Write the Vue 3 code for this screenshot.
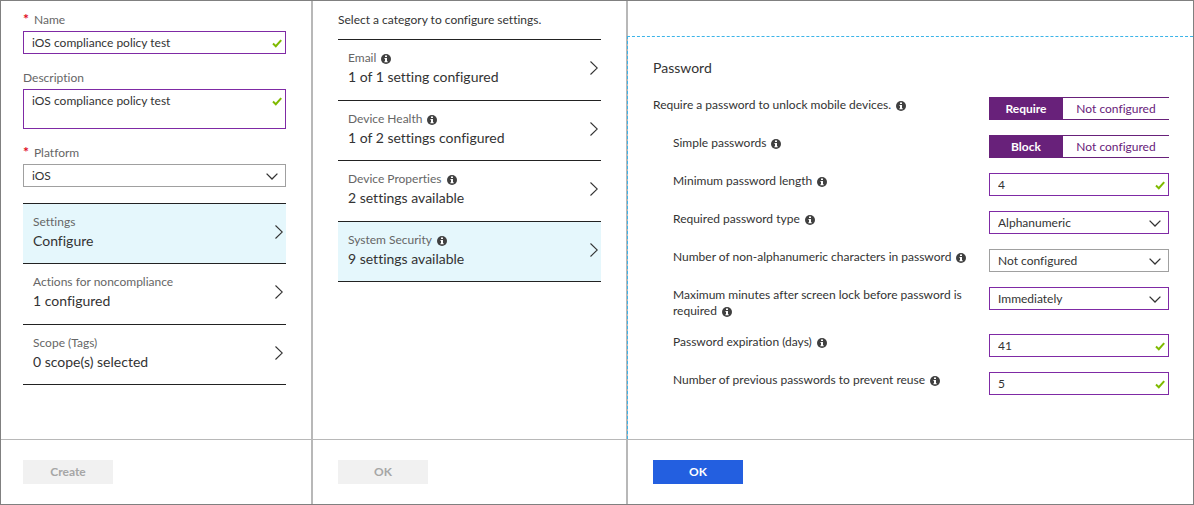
<script setup>
import { ref } from 'vue'

const name = ref('iOS compliance policy test')
const description = ref('iOS compliance policy test')
const platform = ref('iOS')

const steps = [
  { label: 'Settings', value: 'Configure', active: true },
  { label: 'Actions for noncompliance', value: '1 configured' },
  { label: 'Scope (Tags)', value: '0 scope(s) selected' },
]

const categories = [
  { label: 'Email', value: '1 of 1 setting configured' },
  { label: 'Device Health', value: '1 of 2 settings configured' },
  { label: 'Device Properties', value: '2 settings available' },
  { label: 'System Security', value: '9 settings available', active: true },
]

const settings = ref([
  { id: 'require', lead: 'Require a password to unlock mobile', last: 'devices.', type: 'toggle', on: 'Require', root: true },
  { id: 'simple', lead: 'Simple', last: 'passwords', type: 'toggle', on: 'Block' },
  { id: 'length', lead: 'Minimum password', last: 'length', type: 'text', value: '4' },
  { id: 'kind', lead: 'Required password', last: 'type', type: 'select', value: 'Alphanumeric', changed: true },
  { id: 'symbols', lead: 'Number of non-alphanumeric characters in', last: 'password', type: 'select', value: 'Not configured' },
  { id: 'lock', lead: 'Maximum minutes after screen lock before password is', last: 'required', type: 'select', value: 'Immediately', changed: true },
  { id: 'expiry', lead: 'Password expiration', last: '(days)', type: 'text', value: '41' },
  { id: 'reuse', lead: 'Number of previous passwords to prevent', last: 'reuse', type: 'text', value: '5' },
])
</script>

<template>
  <main class="blades">
    <section class="blade">
      <form class="body policy" @submit.prevent>
        <div class="group">
          <label for="name"><span class="star">*</span>Name</label>
          <div class="field">
            <input id="name" v-model="name" type="text" class="control changed" />
            <svg class="mark" viewBox="0 0 10 9"><path d="M1 4.5 3.8 7.2 9.2 1.2" /></svg>
          </div>
        </div>
        <div class="group">
          <label for="description">Description</label>
          <div class="field">
            <textarea id="description" v-model="description" class="control changed"></textarea>
            <svg class="mark" viewBox="0 0 10 9"><path d="M1 4.5 3.8 7.2 9.2 1.2" /></svg>
          </div>
        </div>
        <div class="group">
          <label for="platform"><span class="star">*</span>Platform</label>
          <div class="field">
            <select id="platform" v-model="platform" class="control">
              <option>iOS</option>
            </select>
            <svg class="arrow" viewBox="0 0 12 7"><path d="M.6.6 6 6 11.4.6" /></svg>
          </div>
        </div>
        <div class="list">
          <button v-for="s in steps" :key="s.label" type="button" class="item" :class="{ active: s.active }">
            <span class="caption">{{ s.label }}</span>
            <span class="value">{{ s.value }}</span>
            <svg class="chevron" viewBox="0 0 8 14"><path d="M.5.5 7.3 7 .5 13.5" /></svg>
          </button>
        </div>
      </form>
      <footer><button type="button" disabled class="action">Create</button></footer>
    </section>

    <section class="blade">
      <div class="body categories">
        <p class="hint">Select a category to configure settings.</p>
        <div class="list">
          <button v-for="c in categories" :key="c.label" type="button" class="item" :class="{ active: c.active }">
            <span class="caption">{{ c.label }}<svg class="info" viewBox="0 0 10 10"><circle cx="5" cy="5" r="5" /><path d="M4 1.5h2v1.5H4zM3.5 4H6v3.3h.7v1H3.4v-1H4V5h-.5z" /></svg></span>
            <span class="value">{{ c.value }}</span>
            <svg class="chevron" viewBox="0 0 8 14"><path d="M.5.5 7.3 7 .5 13.5" /></svg>
          </button>
        </div>
      </div>
      <footer><button type="button" disabled class="action">OK</button></footer>
    </section>

    <section class="blade">
      <form class="body security" @submit.prevent>
        <h2>Password</h2>
        <div class="settings">
          <div v-for="s in settings" :key="s.id" class="setting" :class="{ nested: !s.root }">
            <label :id="s.id + '-label'" :for="s.id">{{ s.lead }} <span class="tail">{{ s.last }}<svg class="info" viewBox="0 0 10 10"><circle cx="5" cy="5" r="5" /><path d="M4 1.5h2v1.5H4zM3.5 4H6v3.3h.7v1H3.4v-1H4V5h-.5z" /></svg></span></label>
            <div v-if="s.type === 'toggle'" class="toggle" role="group" :aria-labelledby="s.id + '-label'">
              <button :id="s.id" type="button" class="on" aria-pressed="true">{{ s.on }}</button>
              <button type="button" aria-pressed="false">Not configured</button>
            </div>
            <div v-else-if="s.type === 'text'" class="field">
              <input :id="s.id" v-model="s.value" type="text" class="control changed" />
              <svg class="mark" viewBox="0 0 10 9"><path d="M1 4.5 3.8 7.2 9.2 1.2" /></svg>
            </div>
            <div v-else class="field">
              <select :id="s.id" v-model="s.value" class="control" :class="{ changed: s.changed }">
                <option>{{ s.value }}</option>
              </select>
              <svg class="arrow" viewBox="0 0 12 7"><path d="M.6.6 6 6 11.4.6" /></svg>
            </div>
          </div>
        </div>
      </form>
      <footer><button type="button" class="action primary">OK</button></footer>
    </section>
  </main>
</template>

<style>
body {
  margin: 0;
  background: #fff;
}
</style>

<style scoped>
* {
  box-sizing: border-box;
}

.blades {
  display: grid;
  grid-template-columns: 312px 315px minmax(0, 1fr);
  min-height: 100vh;
  border: 1px solid #808080;
  color: #333;
  font-family: "Segoe UI", Lato, "Open Sans", sans-serif;
  font-size: 12px;
  line-height: 16px;
  font-variant-ligatures: none;
}

button,
input,
select,
textarea {
  margin: 0;
  border-radius: 0;
  color: inherit;
  font: inherit;
  font-variant-ligatures: none;
}

.blade {
  display: flex;
  flex-direction: column;
  border-right: 2px solid #b8b8b8;
}

.blade:last-child {
  border-right: 0;
}

.body {
  flex: 1;
}

.policy,
.categories {
  padding: 11px 25px 0;
}

.policy {
  padding-left: 22px;
}

.group {
  margin-bottom: 16px;
}

.group label {
  display: block;
  margin-bottom: 3px;
  color: #666;
}

.star {
  margin-right: 5px;
  color: #e00b1c;
  font-size: 14px;
  font-weight: 700;
  line-height: 12px;
}

.field {
  position: relative;
}

.control {
  display: block;
  width: 100%;
  height: 23px;
  padding: 0 28px 0 8px;
  border: 1px solid #a0a0a0;
  background: #fff;
  appearance: none;
  outline: 0;
}

.changed {
  border-color: #7f2aa5;
}

textarea.control {
  height: 40px;
  padding-top: 3px;
  resize: none;
}

.mark {
  position: absolute;
  top: 8px;
  right: 4px;
  width: 10px;
  height: 9px;
  fill: none;
  stroke: #7fba00;
  stroke-width: 2;
}

.arrow {
  position: absolute;
  top: 9px;
  right: 8px;
  width: 12px;
  height: 7px;
  fill: none;
  stroke: #333;
  stroke-width: 1.3;
  pointer-events: none;
}

.list {
  display: grid;
  border-top: 1px solid #222;
}

.policy .list {
  min-height: 182px;
}

.categories .list {
  min-height: 243px;
}

.item {
  display: grid;
  grid-template-columns: minmax(0, 1fr) 8px;
  align-content: start;
  align-items: center;
  row-gap: 2px;
  padding: 10px 3px 12px 10px;
  border: 0;
  border-bottom: 1px solid #222;
  background: transparent;
  text-align: left;
}

.active {
  background: #e5f7fc;
}

.caption {
  color: #666;
}

.value {
  grid-row: 2;
  font-size: 14px;
  line-height: 18px;
}

.chevron {
  grid-row: 1 / 3;
  grid-column: 2;
  width: 8px;
  height: 14px;
  fill: none;
  stroke: #333;
  stroke-width: 1.1;
}

.info {
  width: 10px;
  height: 10px;
  margin-left: 5px;
  vertical-align: -2px;
}

.info circle {
  fill: #404040;
}

.info path {
  fill: #fff;
}

.hint {
  margin: 0 0 11px;
}

.security {
  margin: 35px 0 0 -1px;
  padding: 22px 24px 15px 25px;
  border-top: 1px dashed #3cb4e8;
  border-left: 1px dashed #3cb4e8;
}

h2 {
  margin: 0 0 20px;
  font-size: 14px;
  font-weight: 400;
  line-height: 18px;
}

.settings {
  display: grid;
  row-gap: 15px;
}

.setting {
  display: grid;
  grid-template-columns: minmax(0, 1fr) 180px;
  column-gap: 16px;
  align-items: start;
  min-height: 23px;
}

.nested {
  padding-left: 20px;
}

.tail {
  white-space: nowrap;
}

.toggle {
  display: grid;
  grid-template-columns: 74px 1fr;
  height: 23px;
  border: solid #68217a;
  border-width: 1px 0;
}

.toggle button {
  padding: 0;
  border: 0;
  background: #fff;
  color: #68217a;
}

.toggle .on {
  background: #68217a;
  color: #fff;
  font-weight: 700;
}

footer {
  padding: 20px 25px;
  border-top: 1px solid #b8b8b8;
}

.blade:first-child footer {
  padding-left: 22px;
}

.action {
  display: block;
  width: 90px;
  height: 24px;
  padding: 0;
  border: 0;
  background: #f1f1f1;
  color: #a6a6a6;
  font-weight: 700;
}

.primary {
  background: #235fe0;
  color: #fff;
}
</style>
